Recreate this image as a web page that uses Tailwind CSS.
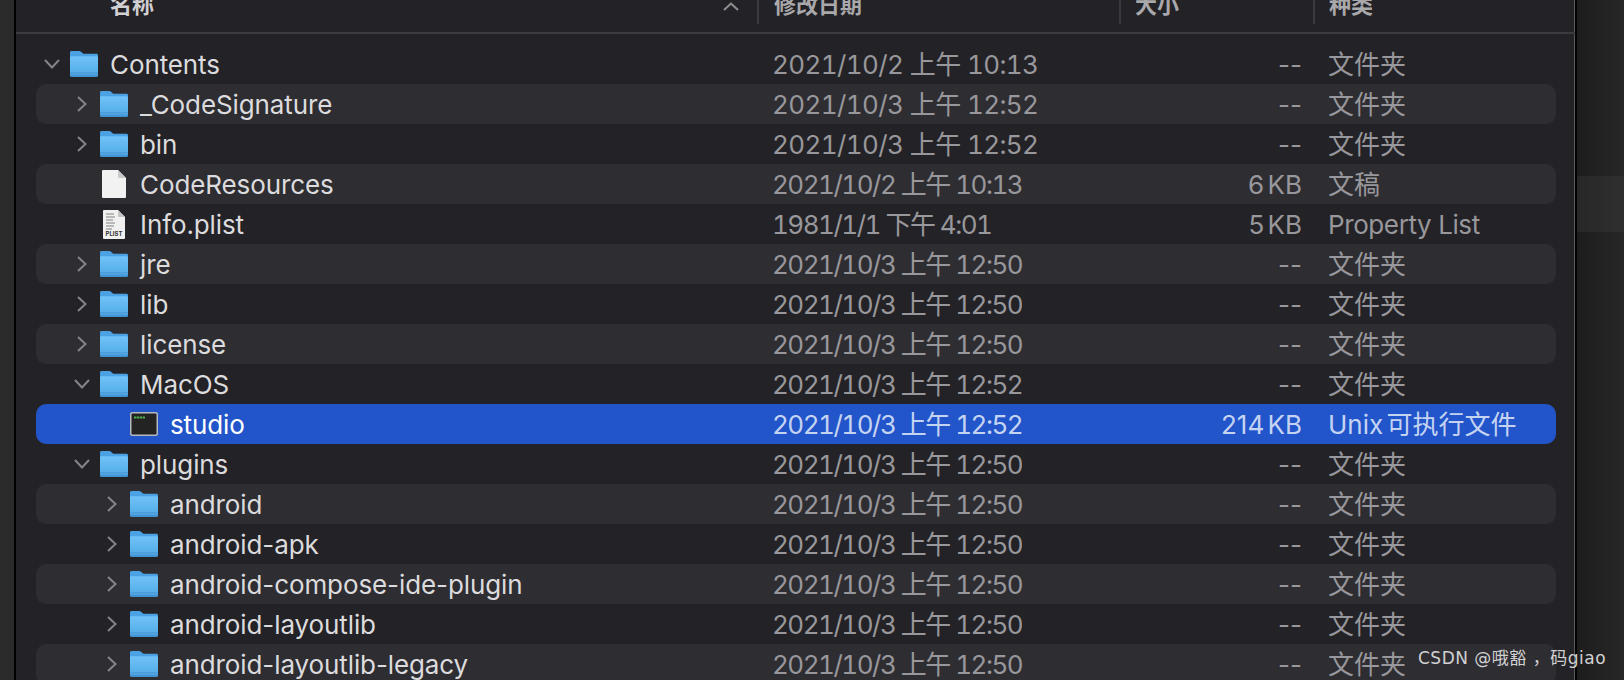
<!DOCTYPE html>
<html lang="zh-CN">
<head>
  <meta charset="UTF-8" />
  <title>Finder</title>
  <script src="https://cdn.jsdelivr.net/npm/@tailwindcss/browser@4"></script>
</head>
<body class="bg-[#232226] font-['Inter','Noto_Sans_CJK_SC',sans-serif]">
  <svg class="absolute w-0 h-0">
    <defs>
      <linearGradient id="folderFront" x1="0" y1="0" x2="0" y2="1">
        <stop offset="0" stop-color="#70c3f6" />
        <stop offset="0.7" stop-color="#58b1ec" />
        <stop offset="0.72" stop-color="#4da3e0" />
        <stop offset="1" stop-color="#3f92d2" />
      </linearGradient>
    </defs>
    <symbol id="folder" viewBox="0 0 28 26">
      <path d="M1.500 0h7.500c1 0 1.600.4 2.300 1l1.400 1.200c.5.4 1 .6 1.600.6H26.500c.9 0 1.500.6 1.500 1.500V8H0V1.500C0 .6.6 0 1.500 0z" fill="#4aa2e4" />
      <path d="M1.500 5.200H26.500c.9 0 1.500.6 1.500 1.500V24.500c0 .9-.6 1.500-1.500 1.500H1.500C.6 26 0 25.400 0 24.500V6.700c0-.9.6-1.500 1.500-1.500z" fill="url(#folderFront)" />
      <path d="M0 20.500h28M0 23h28" stroke="#7cc4f0" stroke-opacity=".4" stroke-width="1" />
    </symbol>
    <symbol id="doc" viewBox="0 0 24 28">
      <path d="M1 0H16L24 8V27a1 1 0 0 1-1 1H1a1 1 0 0 1-1-1V1a1 1 0 0 1 1-1z" fill="#f2f2f2" />
      <path d="M16 0L24 8H17a1 1 0 0 1-1-1z" fill="#c9c9c9" />
    </symbol>
    <symbol id="plist" viewBox="0 0 22 29">
      <path d="M1 0H15L22 7V28a1 1 0 0 1-1 1H1a1 1 0 0 1-1-1V1a1 1 0 0 1 1-1z" fill="#f0f0f0" />
      <path d="M15 0L22 7H16a1 1 0 0 1-1-1z" fill="#c4c4c4" />
      <path d="M3 4h8M3 7h9M3 10h7M3 13h9M3 16h8M3 19h6" stroke="#a5a5a5" stroke-width="1.500" />
    </symbol>
    <symbol id="terminal" viewBox="0 0 28 24">
      <rect x=".75" y=".75" width="26.500" height="22.500" rx="1.500" fill="#232323" stroke="#b5b8bd" stroke-width="1.500" />
      <path d="M4 5.500h11" stroke="#4fae4f" stroke-width="2" stroke-dasharray="2.500 .5" />
    </symbol>
  </svg>

  <div class="flex h-[680px] overflow-hidden">
    <div class="w-[14px] shrink-0 bg-[#2b2b2c]"></div>
    <div class="w-[2px] shrink-0 bg-black"></div>

    <main class="w-[1559px] shrink-0 overflow-hidden bg-[#232226]">
      <header class="relative h-[34px] border-b-2 border-[#3c3b3e] text-[22px] font-semibold text-[#a9a8ab]">
        <div class="flex h-[24px] items-center leading-none">
          <span class="w-[94px]"></span>
          <span class="w-[647px] -translate-y-[7px] text-[#d0cfd2]">名称</span>
          <div class="flex w-[362px] items-center border-l-2 border-[#3a393c] h-full pl-[15px]"><span class="-translate-y-[7px]">修改日期</span></div>
          <div class="flex w-[194px] items-center border-l-2 border-[#3a393c] h-full pl-[14px]"><span class="-translate-y-[7px]">大小</span></div>
          <div class="flex items-center border-l-2 border-[#3a393c] h-full pl-[14px]"><span class="-translate-y-[7px]">种类</span></div>
        </div>
        <svg class="absolute left-[707px] top-[2px] w-[16px] h-[9px]" viewBox="0 0 16 9" fill="none" stroke="#8f8e91" stroke-width="2"><path d="M1 8l7-6.500L15 8" /></svg>
      </header>
      <div id="rows" class="flex flex-col pt-[10px] pl-[20px]"></div>
    </main>

    <div class="w-[1px] shrink-0 bg-[#5a5a5c] -ml-[1px]"></div>
    <div class="w-[2px] shrink-0 bg-black"></div>
    <div class="flex flex-1 flex-col bg-linear-to-r from-[#1d1d1d] to-[#272727]">
      <div class="h-[176px]"></div>
      <div class="h-[56px] bg-linear-to-r from-[#272727] to-[#2f2f2f]"></div>
    </div>
  </div>

  <div class="absolute left-[1418px] top-[646px] whitespace-nowrap font-['DejaVu_Sans','Noto_Sans_CJK_SC',sans-serif] text-[17px] tracking-[0.5px] leading-[24px] text-[#d2d2d2]">CSDN @哦豁 ，码giao</div>

  <script>
    // name, depth, arrow (r/d/none), icon, date, size, kind
    const d = "2021/10/3 上午 ";
    const rows = [
      ["Contents", 0, "d", "folder", "2021/10/2 上午 10:13", "--", "文件夹"],
      ["_CodeSignature", 1, "r", "folder", d + "12:52", "--", "文件夹"],
      ["bin", 1, "r", "folder", d + "12:52", "--", "文件夹"],
      ["CodeResources", 1, "", "doc", "2021/10/2 上午 10:13", "6 KB", "文稿"],
      ["Info.plist", 1, "", "plist", "1981/1/1 下午 4:01", "5 KB", "Property List"],
      ["jre", 1, "r", "folder", d + "12:50", "--", "文件夹"],
      ["lib", 1, "r", "folder", d + "12:50", "--", "文件夹"],
      ["license", 1, "r", "folder", d + "12:50", "--", "文件夹"],
      ["MacOS", 1, "d", "folder", d + "12:52", "--", "文件夹"],
      ["studio", 2, "", "terminal", d + "12:52", "214 KB", "Unix 可执行文件"],
      ["plugins", 1, "d", "folder", d + "12:50", "--", "文件夹"],
      ["android", 2, "r", "folder", d + "12:50", "--", "文件夹"],
      ["android-apk", 2, "r", "folder", d + "12:50", "--", "文件夹"],
      ["android-compose-ide-plugin", 2, "r", "folder", d + "12:50", "--", "文件夹"],
      ["android-layoutlib", 2, "r", "folder", d + "12:50", "--", "文件夹"],
      ["android-layoutlib-legacy", 2, "r", "folder", d + "12:50", "--", "文件夹"],
    ];

    const arrows = {
      d: '<svg class="absolute left-[8px] top-[15px] w-[16px] h-[10px]" viewBox="0 0 16 10" fill="none" stroke="#858488" stroke-width="2"><path d="M1 1l7 7.500L15 1" /></svg>',
      r: '<svg class="absolute left-[11px] top-[12px] w-[10px] h-[16px]" viewBox="0 0 10 16" fill="none" stroke="#858488" stroke-width="2"><path d="M1 1l7.500 7L1 15" /></svg>',
    };
    const icons = {
      folder: '<svg class="w-[28px] h-[26px] shrink-0"><use href="#folder" /></svg>',
      doc: '<svg class="w-[24px] h-[28px] shrink-0 ml-[2px] mr-[2px]"><use href="#doc" /></svg>',
      plist: '<span class="relative block w-[22px] h-[29px] shrink-0 ml-[3px] mr-[3px]"><svg class="w-[22px] h-[29px]"><use href="#plist" /></svg><span class="absolute inset-x-0 bottom-[2px] text-center text-[6px] leading-[7px] font-bold text-[#333]">PLIST</span></span>',
      terminal: '<svg class="w-[28px] h-[24px] shrink-0"><use href="#terminal" /></svg>',
    };

    document.getElementById("rows").innerHTML = rows.map((r, i) => {
      const selected = r[0] === "studio";
      let bg = "";
      if (selected) bg = "bg-[#2155c9]";
      else if (i % 2 === 1) bg = "bg-[#2e2d32]";
      const nameColor = selected ? "text-white" : "text-[#dcdbdd]";
      const dim = selected ? "text-[#c5d3f3]" : "text-[#98979b]";
      // the first three date cells are set wider in the screenshot
      const dateTrack = i < 3 ? "tracking-[-0.6px]" : "tracking-[-1.5px]";
      const kindSpacing = r[6] === "Property List" ? "tracking-[-0.4px]" : "[word-spacing:-4px]";
      return `<div class="grid h-[40px] w-[1520px] grid-cols-[736px_529px_1fr] items-center rounded-[10px] text-[26px] leading-none ${bg}">
        <div class="relative flex items-center h-full" style="padding-left:${r[1] * 30}px">
          <span class="relative block w-[34px] h-full shrink-0">${arrows[r[2]] || ""}</span>
          ${icons[r[3]]}
          <span class="ml-[12px] translate-y-[1px] whitespace-nowrap tracking-[-0.1px] ${nameColor}">${r[0]}</span>
        </div>
        <div class="whitespace-nowrap translate-y-[1px] tabular-nums ${dateTrack} ${dim}">${r[4]}</div>
        <div class="flex translate-y-[1px]">
          <span class="whitespace-nowrap [word-spacing:-4px] ${dim} -ml-[529px] w-[530px] text-right">${r[5]}</span>
          <span class="whitespace-nowrap ${kindSpacing} ${dim} ml-[26px]">${r[6]}</span>
        </div>
      </div>`;
    }).join("");
  </script>
</body>
</html>
